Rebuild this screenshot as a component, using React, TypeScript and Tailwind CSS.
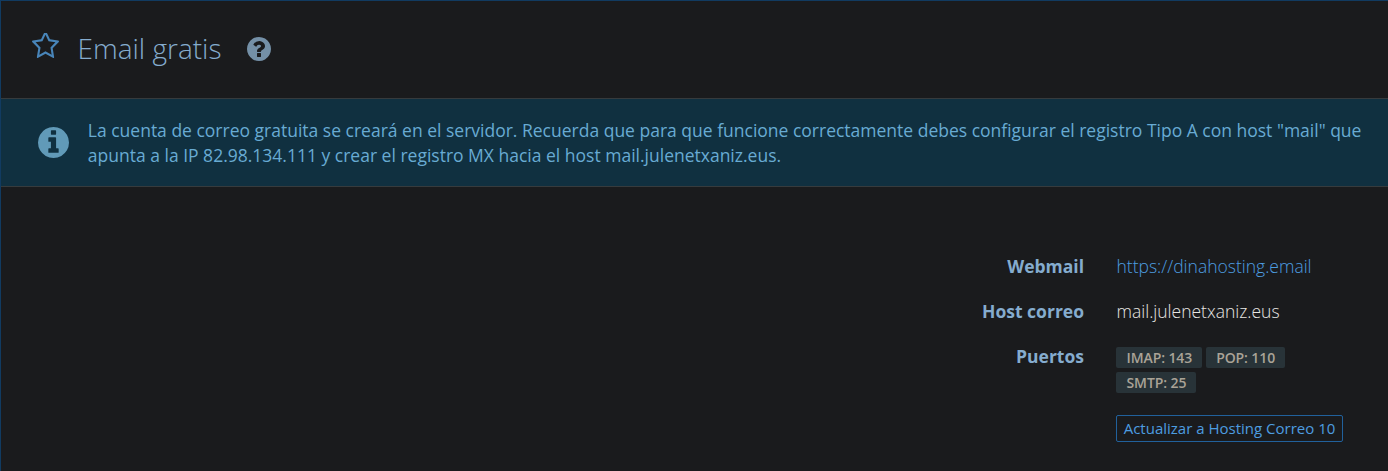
import type { ReactNode } from "react";

const CIRCLE =
  "m640 416q0 209-103 385.5t-279.5 279.5-385.5 103-385.5-103-279.5-279.5-103-385.5 103-385.5 279.5-279.5 385.5-103 385.5 103 279.5 279.5 103 385.5z";

function StarIcon() {
  return (
    <svg viewBox="64 160 1664 1459" className="mt-0 ml-[31px] h-[25px] w-[27px] shrink-0 fill-[#4885b9]" preserveAspectRatio="none">
      <path d="M1201 1004l306-297-422-62-189-382-189 382-422 62 306 297-73 421 378-199 377 199zm527-357q0 22-26 48l-363 354 86 500q1 7 1 20 0 50-41 50-19 0-40-12l-449-236-449 236q-22 12-40 12-21 0-31.5-14.5t-10.5-35.5q0-6 2-20l86-500-364-354q-25-27-25-48 0-37 56-46l502-73 225-455q19-41 49-41t49 41l225 455 502 73q56 9 56 46z" />
    </svg>
  );
}

function QuestionIcon() {
  return (
    <svg viewBox="128 128 1536 1536" className="mt-1 ml-[25.7px] size-6 shrink-0 fill-[#7490a7]">
      <path d="M1024 1376v-192q0-14-9-23t-23-9h-192q-14 0-23 9t-9 23v192q0 14 9 23t23 9h192q14 0 23-9t9-23zm256-672q0-88-55.5-163t-138.5-116-170-41q-243 0-371 213-15 24 8 42l132 100q7 6 19 6 16 0 25-12 53-68 86-92 34-24 86-24 48 0 85.5 26t37.5 59q0 38-20 61t-68 45q-63 28-115.5 86.5t-52.5 125.5v36q0 14 9 23t23 9h192q14 0 23-9t9-23q0-19 21.5-49.5t54.5-49.5q32-18 49-28.5t46-35 44.5-48 28-60.5 12.5-81zm384 192q0 209-103 385.5t-279.5 279.5-385.5 103-385.5-103-279.5-279.5-103-385.5 103-385.5 279.5-279.5 385.5-103 385.5 103 279.5 279.5 103 385.5z" />
    </svg>
  );
}

function InfoIcon() {
  return (
    <svg viewBox="128 128 1536 1536" className="mt-[28px] ml-[37px] size-[31px] shrink-0 fill-[#619ab8]">
      <path
        d={
          "M1152 1376v-160q0-14-9-23t-23-9h-96v-512q0-14-9-23t-23-9h-320q-14 0-23 9t-9 23v160q0 14 9 23t23 9h96v320h-96q-14 0-23 9t-9 23v160q0 14 9 23t23 9h448q14 0 23-9t9-23zm-128-896v-160q0-14-9-23t-23-9h-192q-14 0-23 9t-9 23v160q0 14 9 23t23 9h192q14 0 23-9t9-23z" +
          CIRCLE
        }
      />
    </svg>
  );
}

function Row({ label, children }: { label: string; children: ReactNode }) {
  return (
    <div className="flex text-[17.5px] leading-[25px]">
      <dt className="w-[1083px] shrink-0 text-right font-bold text-[#85acce]">{label}</dt>
      <dd className="ml-8 w-[227px] font-light text-[#e8e6e3]">{children}</dd>
    </div>
  );
}

function Badge({ children }: { children: ReactNode }) {
  return (
    <span className="flex h-[21px] items-center rounded-[2px] bg-[#283338] pr-[9.5px] pl-[10.5px] text-[14px] font-semibold tracking-[-0.1px] text-[#aaa397]">
      {children}
    </span>
  );
}

export default function App() {
  return (
    <main className="h-[471px] w-full overflow-hidden border-t border-l border-[#113b61] bg-[#1a1b1d] font-['Open_Sans',sans-serif]">
      <header className="flex h-[97px] items-start pt-8">
        <StarIcon />
        <h1 className="-mt-[3px] ml-[18.5px] text-[28px] leading-9 font-light whitespace-nowrap text-[#85acce]">Email gratis</h1>
        <QuestionIcon />
      </header>
      <section className="flex h-[89px] border-y border-[#363b3d] bg-[#103040]">
        <InfoIcon />
        <p className="mt-[19px] ml-[18.8px] text-[17.5px] leading-[25px] whitespace-nowrap text-[#68abd3]">
          La cuenta de correo gratuita se creará en el servidor. Recuerda que para que funcione correctamente debes configurar el registro Tipo A con host "mail" que
          <br />
          apunta a la IP 82.98.134.111 y crear el registro MX hacia el host mail.julenetxaniz.eus.
        </p>
      </section>
      <dl className="flex flex-col gap-5 pt-[67px]">
        <Row label="Webmail">
          <a className="pl-[0.5px] text-[#4d9de0]">https://dinahosting.email</a>
        </Row>
        <Row label="Host correo">
          <span className="pl-[0.5px]">mail.julenetxaniz.eus</span>
        </Row>
        <Row label="Puertos">
          <div className="flex flex-wrap gap-1 pt-[3px]">
            <Badge>IMAP: 143</Badge>
            <Badge>POP: 110</Badge>
            <Badge>SMTP: 25</Badge>
          </div>
          <button className="mt-[22px] flex h-[27px] w-[227px] items-center justify-center rounded-[2px] border border-[#21619c] text-[15px] font-normal whitespace-nowrap text-[#4d9de0]">
            Actualizar a Hosting Correo 10
          </button>
        </Row>
      </dl>
    </main>
  );
}
